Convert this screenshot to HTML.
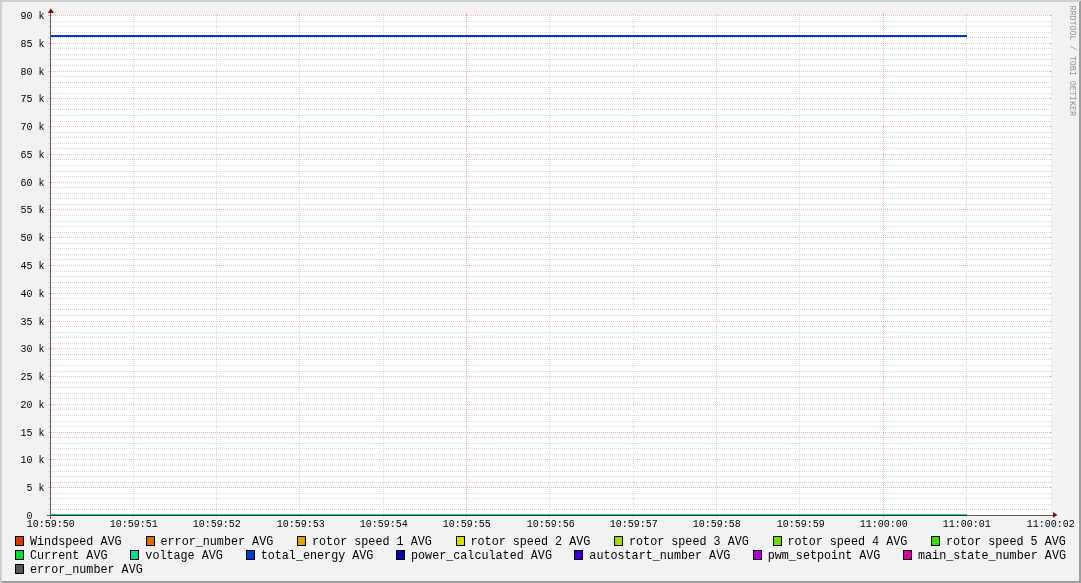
<!DOCTYPE html><html><head><meta charset="utf-8"><style>html,body{margin:0;padding:0;background:#f2f2f2;overflow:hidden;width:1081px;height:583px}svg{display:block} text{font-family:"Liberation Mono",monospace;}</style></head><body>
<svg width="1081" height="583" viewBox="0 0 1081 583" shape-rendering="crispEdges">
<defs><pattern id="hg" patternUnits="userSpaceOnUse" x="0" y="0" width="2" height="1"><rect x="0" y="0" width="1" height="1" fill="#dadada"/></pattern><pattern id="hm" patternUnits="userSpaceOnUse" x="1" y="0" width="2" height="1"><rect x="0" y="0" width="1" height="1" fill="#f3b6b6"/></pattern><pattern id="vg" patternUnits="userSpaceOnUse" x="0" y="1" width="1" height="2"><rect x="0" y="0" width="1" height="1" fill="#dadada"/></pattern><pattern id="vm" patternUnits="userSpaceOnUse" x="0" y="1" width="1" height="2"><rect x="0" y="0" width="1" height="1" fill="#f3b6b6"/></pattern><pattern id="axv" patternUnits="userSpaceOnUse" x="0" y="0" width="1" height="2"><rect x="0" y="0" width="1" height="1" fill="#626262"/><rect x="0" y="1" width="1" height="1" fill="#784444"/></pattern><pattern id="axh" patternUnits="userSpaceOnUse" x="0" y="0" width="2" height="1"><rect x="0" y="0" width="1" height="1" fill="#626262"/><rect x="1" y="0" width="1" height="1" fill="#784444"/></pattern><pattern id="axd" patternUnits="userSpaceOnUse" x="0" y="0" width="2" height="1"><rect x="0" y="0" width="1" height="1" fill="#26302c"/><rect x="1" y="0" width="1" height="1" fill="#3e2c2c"/></pattern></defs>
<rect x="0" y="0" width="1081" height="583" fill="#f2f2f2"/>
<polygon points="0,0 1081,0 1079,2 2,2 2,581 0,583" fill="#cfcfcf"/>
<polygon points="1081,0 1081,583 0,583 2,581 1079,581 1079,2" fill="#9e9e9e"/>
<rect x="50" y="15" width="1001" height="501" fill="#ffffff"/>
<rect x="48" y="509" width="2" height="1" fill="#dadada"/><rect x="51" y="509" width="999" height="1" fill="url(#hg)"/><rect x="1050" y="509" width="2" height="1" fill="#dadada"/>
<rect x="48" y="504" width="2" height="1" fill="#dadada"/><rect x="51" y="504" width="999" height="1" fill="url(#hg)"/><rect x="1050" y="504" width="2" height="1" fill="#dadada"/>
<rect x="48" y="498" width="2" height="1" fill="#dadada"/><rect x="51" y="498" width="999" height="1" fill="url(#hg)"/><rect x="1050" y="498" width="2" height="1" fill="#dadada"/>
<rect x="48" y="493" width="2" height="1" fill="#dadada"/><rect x="51" y="493" width="999" height="1" fill="url(#hg)"/><rect x="1050" y="493" width="2" height="1" fill="#dadada"/>
<rect x="48" y="482" width="2" height="1" fill="#dadada"/><rect x="51" y="482" width="999" height="1" fill="url(#hg)"/><rect x="1050" y="482" width="2" height="1" fill="#dadada"/>
<rect x="48" y="476" width="2" height="1" fill="#dadada"/><rect x="51" y="476" width="999" height="1" fill="url(#hg)"/><rect x="1050" y="476" width="2" height="1" fill="#dadada"/>
<rect x="48" y="471" width="2" height="1" fill="#dadada"/><rect x="51" y="471" width="999" height="1" fill="url(#hg)"/><rect x="1050" y="471" width="2" height="1" fill="#dadada"/>
<rect x="48" y="465" width="2" height="1" fill="#dadada"/><rect x="51" y="465" width="999" height="1" fill="url(#hg)"/><rect x="1050" y="465" width="2" height="1" fill="#dadada"/>
<rect x="48" y="454" width="2" height="1" fill="#dadada"/><rect x="51" y="454" width="999" height="1" fill="url(#hg)"/><rect x="1050" y="454" width="2" height="1" fill="#dadada"/>
<rect x="48" y="448" width="2" height="1" fill="#dadada"/><rect x="51" y="448" width="999" height="1" fill="url(#hg)"/><rect x="1050" y="448" width="2" height="1" fill="#dadada"/>
<rect x="48" y="443" width="2" height="1" fill="#dadada"/><rect x="51" y="443" width="999" height="1" fill="url(#hg)"/><rect x="1050" y="443" width="2" height="1" fill="#dadada"/>
<rect x="48" y="437" width="2" height="1" fill="#dadada"/><rect x="51" y="437" width="999" height="1" fill="url(#hg)"/><rect x="1050" y="437" width="2" height="1" fill="#dadada"/>
<rect x="48" y="426" width="2" height="1" fill="#dadada"/><rect x="51" y="426" width="999" height="1" fill="url(#hg)"/><rect x="1050" y="426" width="2" height="1" fill="#dadada"/>
<rect x="48" y="421" width="2" height="1" fill="#dadada"/><rect x="51" y="421" width="999" height="1" fill="url(#hg)"/><rect x="1050" y="421" width="2" height="1" fill="#dadada"/>
<rect x="48" y="415" width="2" height="1" fill="#dadada"/><rect x="51" y="415" width="999" height="1" fill="url(#hg)"/><rect x="1050" y="415" width="2" height="1" fill="#dadada"/>
<rect x="48" y="409" width="2" height="1" fill="#dadada"/><rect x="51" y="409" width="999" height="1" fill="url(#hg)"/><rect x="1050" y="409" width="2" height="1" fill="#dadada"/>
<rect x="48" y="398" width="2" height="1" fill="#dadada"/><rect x="51" y="398" width="999" height="1" fill="url(#hg)"/><rect x="1050" y="398" width="2" height="1" fill="#dadada"/>
<rect x="48" y="393" width="2" height="1" fill="#dadada"/><rect x="51" y="393" width="999" height="1" fill="url(#hg)"/><rect x="1050" y="393" width="2" height="1" fill="#dadada"/>
<rect x="48" y="387" width="2" height="1" fill="#dadada"/><rect x="51" y="387" width="999" height="1" fill="url(#hg)"/><rect x="1050" y="387" width="2" height="1" fill="#dadada"/>
<rect x="48" y="382" width="2" height="1" fill="#dadada"/><rect x="51" y="382" width="999" height="1" fill="url(#hg)"/><rect x="1050" y="382" width="2" height="1" fill="#dadada"/>
<rect x="48" y="371" width="2" height="1" fill="#dadada"/><rect x="51" y="371" width="999" height="1" fill="url(#hg)"/><rect x="1050" y="371" width="2" height="1" fill="#dadada"/>
<rect x="48" y="365" width="2" height="1" fill="#dadada"/><rect x="51" y="365" width="999" height="1" fill="url(#hg)"/><rect x="1050" y="365" width="2" height="1" fill="#dadada"/>
<rect x="48" y="359" width="2" height="1" fill="#dadada"/><rect x="51" y="359" width="999" height="1" fill="url(#hg)"/><rect x="1050" y="359" width="2" height="1" fill="#dadada"/>
<rect x="48" y="354" width="2" height="1" fill="#dadada"/><rect x="51" y="354" width="999" height="1" fill="url(#hg)"/><rect x="1050" y="354" width="2" height="1" fill="#dadada"/>
<rect x="48" y="343" width="2" height="1" fill="#dadada"/><rect x="51" y="343" width="999" height="1" fill="url(#hg)"/><rect x="1050" y="343" width="2" height="1" fill="#dadada"/>
<rect x="48" y="337" width="2" height="1" fill="#dadada"/><rect x="51" y="337" width="999" height="1" fill="url(#hg)"/><rect x="1050" y="337" width="2" height="1" fill="#dadada"/>
<rect x="48" y="332" width="2" height="1" fill="#dadada"/><rect x="51" y="332" width="999" height="1" fill="url(#hg)"/><rect x="1050" y="332" width="2" height="1" fill="#dadada"/>
<rect x="48" y="326" width="2" height="1" fill="#dadada"/><rect x="51" y="326" width="999" height="1" fill="url(#hg)"/><rect x="1050" y="326" width="2" height="1" fill="#dadada"/>
<rect x="48" y="315" width="2" height="1" fill="#dadada"/><rect x="51" y="315" width="999" height="1" fill="url(#hg)"/><rect x="1050" y="315" width="2" height="1" fill="#dadada"/>
<rect x="48" y="309" width="2" height="1" fill="#dadada"/><rect x="51" y="309" width="999" height="1" fill="url(#hg)"/><rect x="1050" y="309" width="2" height="1" fill="#dadada"/>
<rect x="48" y="304" width="2" height="1" fill="#dadada"/><rect x="51" y="304" width="999" height="1" fill="url(#hg)"/><rect x="1050" y="304" width="2" height="1" fill="#dadada"/>
<rect x="48" y="298" width="2" height="1" fill="#dadada"/><rect x="51" y="298" width="999" height="1" fill="url(#hg)"/><rect x="1050" y="298" width="2" height="1" fill="#dadada"/>
<rect x="48" y="287" width="2" height="1" fill="#dadada"/><rect x="51" y="287" width="999" height="1" fill="url(#hg)"/><rect x="1050" y="287" width="2" height="1" fill="#dadada"/>
<rect x="48" y="282" width="2" height="1" fill="#dadada"/><rect x="51" y="282" width="999" height="1" fill="url(#hg)"/><rect x="1050" y="282" width="2" height="1" fill="#dadada"/>
<rect x="48" y="276" width="2" height="1" fill="#dadada"/><rect x="51" y="276" width="999" height="1" fill="url(#hg)"/><rect x="1050" y="276" width="2" height="1" fill="#dadada"/>
<rect x="48" y="271" width="2" height="1" fill="#dadada"/><rect x="51" y="271" width="999" height="1" fill="url(#hg)"/><rect x="1050" y="271" width="2" height="1" fill="#dadada"/>
<rect x="48" y="259" width="2" height="1" fill="#dadada"/><rect x="51" y="259" width="999" height="1" fill="url(#hg)"/><rect x="1050" y="259" width="2" height="1" fill="#dadada"/>
<rect x="48" y="254" width="2" height="1" fill="#dadada"/><rect x="51" y="254" width="999" height="1" fill="url(#hg)"/><rect x="1050" y="254" width="2" height="1" fill="#dadada"/>
<rect x="48" y="248" width="2" height="1" fill="#dadada"/><rect x="51" y="248" width="999" height="1" fill="url(#hg)"/><rect x="1050" y="248" width="2" height="1" fill="#dadada"/>
<rect x="48" y="243" width="2" height="1" fill="#dadada"/><rect x="51" y="243" width="999" height="1" fill="url(#hg)"/><rect x="1050" y="243" width="2" height="1" fill="#dadada"/>
<rect x="48" y="232" width="2" height="1" fill="#dadada"/><rect x="51" y="232" width="999" height="1" fill="url(#hg)"/><rect x="1050" y="232" width="2" height="1" fill="#dadada"/>
<rect x="48" y="226" width="2" height="1" fill="#dadada"/><rect x="51" y="226" width="999" height="1" fill="url(#hg)"/><rect x="1050" y="226" width="2" height="1" fill="#dadada"/>
<rect x="48" y="221" width="2" height="1" fill="#dadada"/><rect x="51" y="221" width="999" height="1" fill="url(#hg)"/><rect x="1050" y="221" width="2" height="1" fill="#dadada"/>
<rect x="48" y="215" width="2" height="1" fill="#dadada"/><rect x="51" y="215" width="999" height="1" fill="url(#hg)"/><rect x="1050" y="215" width="2" height="1" fill="#dadada"/>
<rect x="48" y="204" width="2" height="1" fill="#dadada"/><rect x="51" y="204" width="999" height="1" fill="url(#hg)"/><rect x="1050" y="204" width="2" height="1" fill="#dadada"/>
<rect x="48" y="198" width="2" height="1" fill="#dadada"/><rect x="51" y="198" width="999" height="1" fill="url(#hg)"/><rect x="1050" y="198" width="2" height="1" fill="#dadada"/>
<rect x="48" y="193" width="2" height="1" fill="#dadada"/><rect x="51" y="193" width="999" height="1" fill="url(#hg)"/><rect x="1050" y="193" width="2" height="1" fill="#dadada"/>
<rect x="48" y="187" width="2" height="1" fill="#dadada"/><rect x="51" y="187" width="999" height="1" fill="url(#hg)"/><rect x="1050" y="187" width="2" height="1" fill="#dadada"/>
<rect x="48" y="176" width="2" height="1" fill="#dadada"/><rect x="51" y="176" width="999" height="1" fill="url(#hg)"/><rect x="1050" y="176" width="2" height="1" fill="#dadada"/>
<rect x="48" y="171" width="2" height="1" fill="#dadada"/><rect x="51" y="171" width="999" height="1" fill="url(#hg)"/><rect x="1050" y="171" width="2" height="1" fill="#dadada"/>
<rect x="48" y="165" width="2" height="1" fill="#dadada"/><rect x="51" y="165" width="999" height="1" fill="url(#hg)"/><rect x="1050" y="165" width="2" height="1" fill="#dadada"/>
<rect x="48" y="159" width="2" height="1" fill="#dadada"/><rect x="51" y="159" width="999" height="1" fill="url(#hg)"/><rect x="1050" y="159" width="2" height="1" fill="#dadada"/>
<rect x="48" y="148" width="2" height="1" fill="#dadada"/><rect x="51" y="148" width="999" height="1" fill="url(#hg)"/><rect x="1050" y="148" width="2" height="1" fill="#dadada"/>
<rect x="48" y="143" width="2" height="1" fill="#dadada"/><rect x="51" y="143" width="999" height="1" fill="url(#hg)"/><rect x="1050" y="143" width="2" height="1" fill="#dadada"/>
<rect x="48" y="137" width="2" height="1" fill="#dadada"/><rect x="51" y="137" width="999" height="1" fill="url(#hg)"/><rect x="1050" y="137" width="2" height="1" fill="#dadada"/>
<rect x="48" y="132" width="2" height="1" fill="#dadada"/><rect x="51" y="132" width="999" height="1" fill="url(#hg)"/><rect x="1050" y="132" width="2" height="1" fill="#dadada"/>
<rect x="48" y="121" width="2" height="1" fill="#dadada"/><rect x="51" y="121" width="999" height="1" fill="url(#hg)"/><rect x="1050" y="121" width="2" height="1" fill="#dadada"/>
<rect x="48" y="115" width="2" height="1" fill="#dadada"/><rect x="51" y="115" width="999" height="1" fill="url(#hg)"/><rect x="1050" y="115" width="2" height="1" fill="#dadada"/>
<rect x="48" y="109" width="2" height="1" fill="#dadada"/><rect x="51" y="109" width="999" height="1" fill="url(#hg)"/><rect x="1050" y="109" width="2" height="1" fill="#dadada"/>
<rect x="48" y="104" width="2" height="1" fill="#dadada"/><rect x="51" y="104" width="999" height="1" fill="url(#hg)"/><rect x="1050" y="104" width="2" height="1" fill="#dadada"/>
<rect x="48" y="93" width="2" height="1" fill="#dadada"/><rect x="51" y="93" width="999" height="1" fill="url(#hg)"/><rect x="1050" y="93" width="2" height="1" fill="#dadada"/>
<rect x="48" y="87" width="2" height="1" fill="#dadada"/><rect x="51" y="87" width="999" height="1" fill="url(#hg)"/><rect x="1050" y="87" width="2" height="1" fill="#dadada"/>
<rect x="48" y="82" width="2" height="1" fill="#dadada"/><rect x="51" y="82" width="999" height="1" fill="url(#hg)"/><rect x="1050" y="82" width="2" height="1" fill="#dadada"/>
<rect x="48" y="76" width="2" height="1" fill="#dadada"/><rect x="51" y="76" width="999" height="1" fill="url(#hg)"/><rect x="1050" y="76" width="2" height="1" fill="#dadada"/>
<rect x="48" y="65" width="2" height="1" fill="#dadada"/><rect x="51" y="65" width="999" height="1" fill="url(#hg)"/><rect x="1050" y="65" width="2" height="1" fill="#dadada"/>
<rect x="48" y="59" width="2" height="1" fill="#dadada"/><rect x="51" y="59" width="999" height="1" fill="url(#hg)"/><rect x="1050" y="59" width="2" height="1" fill="#dadada"/>
<rect x="48" y="54" width="2" height="1" fill="#dadada"/><rect x="51" y="54" width="999" height="1" fill="url(#hg)"/><rect x="1050" y="54" width="2" height="1" fill="#dadada"/>
<rect x="48" y="48" width="2" height="1" fill="#dadada"/><rect x="51" y="48" width="999" height="1" fill="url(#hg)"/><rect x="1050" y="48" width="2" height="1" fill="#dadada"/>
<rect x="48" y="37" width="2" height="1" fill="#dadada"/><rect x="51" y="37" width="999" height="1" fill="url(#hg)"/><rect x="1050" y="37" width="2" height="1" fill="#dadada"/>
<rect x="48" y="32" width="2" height="1" fill="#dadada"/><rect x="51" y="32" width="999" height="1" fill="url(#hg)"/><rect x="1050" y="32" width="2" height="1" fill="#dadada"/>
<rect x="48" y="26" width="2" height="1" fill="#dadada"/><rect x="51" y="26" width="999" height="1" fill="url(#hg)"/><rect x="1050" y="26" width="2" height="1" fill="#dadada"/>
<rect x="48" y="21" width="2" height="1" fill="#dadada"/><rect x="51" y="21" width="999" height="1" fill="url(#hg)"/><rect x="1050" y="21" width="2" height="1" fill="#dadada"/>
<rect x="133" y="13" width="1" height="2" fill="#dadada"/><rect x="133" y="15" width="1" height="500" fill="url(#vg)"/><rect x="133" y="516" width="1" height="2" fill="#dadada"/>
<rect x="216" y="13" width="1" height="2" fill="#dadada"/><rect x="216" y="15" width="1" height="500" fill="url(#vg)"/><rect x="216" y="516" width="1" height="2" fill="#dadada"/>
<rect x="299" y="13" width="1" height="2" fill="#dadada"/><rect x="299" y="15" width="1" height="500" fill="url(#vg)"/><rect x="299" y="516" width="1" height="2" fill="#dadada"/>
<rect x="383" y="13" width="1" height="2" fill="#dadada"/><rect x="383" y="15" width="1" height="500" fill="url(#vg)"/><rect x="383" y="516" width="1" height="2" fill="#dadada"/>
<rect x="549" y="13" width="1" height="2" fill="#dadada"/><rect x="549" y="15" width="1" height="500" fill="url(#vg)"/><rect x="549" y="516" width="1" height="2" fill="#dadada"/>
<rect x="633" y="13" width="1" height="2" fill="#dadada"/><rect x="633" y="15" width="1" height="500" fill="url(#vg)"/><rect x="633" y="516" width="1" height="2" fill="#dadada"/>
<rect x="716" y="13" width="1" height="2" fill="#dadada"/><rect x="716" y="15" width="1" height="500" fill="url(#vg)"/><rect x="716" y="516" width="1" height="2" fill="#dadada"/>
<rect x="799" y="13" width="1" height="2" fill="#dadada"/><rect x="799" y="15" width="1" height="500" fill="url(#vg)"/><rect x="799" y="516" width="1" height="2" fill="#dadada"/>
<rect x="966" y="13" width="1" height="2" fill="#dadada"/><rect x="966" y="15" width="1" height="500" fill="url(#vg)"/><rect x="966" y="516" width="1" height="2" fill="#dadada"/>
<rect x="48" y="487" width="2" height="1" fill="#f3b6b6"/><rect x="51" y="487" width="999" height="1" fill="url(#hm)"/><rect x="1050" y="487" width="2" height="1" fill="#f3b6b6"/>
<rect x="48" y="459" width="2" height="1" fill="#f3b6b6"/><rect x="51" y="459" width="999" height="1" fill="url(#hm)"/><rect x="1050" y="459" width="2" height="1" fill="#f3b6b6"/>
<rect x="48" y="432" width="2" height="1" fill="#f3b6b6"/><rect x="51" y="432" width="999" height="1" fill="url(#hm)"/><rect x="1050" y="432" width="2" height="1" fill="#f3b6b6"/>
<rect x="48" y="404" width="2" height="1" fill="#f3b6b6"/><rect x="51" y="404" width="999" height="1" fill="url(#hm)"/><rect x="1050" y="404" width="2" height="1" fill="#f3b6b6"/>
<rect x="48" y="376" width="2" height="1" fill="#f3b6b6"/><rect x="51" y="376" width="999" height="1" fill="url(#hm)"/><rect x="1050" y="376" width="2" height="1" fill="#f3b6b6"/>
<rect x="48" y="348" width="2" height="1" fill="#f3b6b6"/><rect x="51" y="348" width="999" height="1" fill="url(#hm)"/><rect x="1050" y="348" width="2" height="1" fill="#f3b6b6"/>
<rect x="48" y="321" width="2" height="1" fill="#f3b6b6"/><rect x="51" y="321" width="999" height="1" fill="url(#hm)"/><rect x="1050" y="321" width="2" height="1" fill="#f3b6b6"/>
<rect x="48" y="293" width="2" height="1" fill="#f3b6b6"/><rect x="51" y="293" width="999" height="1" fill="url(#hm)"/><rect x="1050" y="293" width="2" height="1" fill="#f3b6b6"/>
<rect x="48" y="265" width="2" height="1" fill="#f3b6b6"/><rect x="51" y="265" width="999" height="1" fill="url(#hm)"/><rect x="1050" y="265" width="2" height="1" fill="#f3b6b6"/>
<rect x="48" y="237" width="2" height="1" fill="#f3b6b6"/><rect x="51" y="237" width="999" height="1" fill="url(#hm)"/><rect x="1050" y="237" width="2" height="1" fill="#f3b6b6"/>
<rect x="48" y="209" width="2" height="1" fill="#f3b6b6"/><rect x="51" y="209" width="999" height="1" fill="url(#hm)"/><rect x="1050" y="209" width="2" height="1" fill="#f3b6b6"/>
<rect x="48" y="182" width="2" height="1" fill="#f3b6b6"/><rect x="51" y="182" width="999" height="1" fill="url(#hm)"/><rect x="1050" y="182" width="2" height="1" fill="#f3b6b6"/>
<rect x="48" y="154" width="2" height="1" fill="#f3b6b6"/><rect x="51" y="154" width="999" height="1" fill="url(#hm)"/><rect x="1050" y="154" width="2" height="1" fill="#f3b6b6"/>
<rect x="48" y="126" width="2" height="1" fill="#f3b6b6"/><rect x="51" y="126" width="999" height="1" fill="url(#hm)"/><rect x="1050" y="126" width="2" height="1" fill="#f3b6b6"/>
<rect x="48" y="98" width="2" height="1" fill="#f3b6b6"/><rect x="51" y="98" width="999" height="1" fill="url(#hm)"/><rect x="1050" y="98" width="2" height="1" fill="#f3b6b6"/>
<rect x="48" y="71" width="2" height="1" fill="#f3b6b6"/><rect x="51" y="71" width="999" height="1" fill="url(#hm)"/><rect x="1050" y="71" width="2" height="1" fill="#f3b6b6"/>
<rect x="48" y="43" width="2" height="1" fill="#f3b6b6"/><rect x="51" y="43" width="999" height="1" fill="url(#hm)"/><rect x="1050" y="43" width="2" height="1" fill="#f3b6b6"/>
<rect x="48" y="15" width="2" height="1" fill="#f3b6b6"/><rect x="51" y="15" width="999" height="1" fill="url(#hm)"/><rect x="1050" y="15" width="2" height="1" fill="#f3b6b6"/>
<rect x="466" y="13" width="1" height="2" fill="#f3b6b6"/><rect x="466" y="15" width="1" height="500" fill="url(#vm)"/><rect x="466" y="516" width="1" height="2" fill="#f3b6b6"/>
<rect x="883" y="13" width="1" height="2" fill="#f3b6b6"/><rect x="883" y="15" width="1" height="500" fill="url(#vm)"/><rect x="883" y="516" width="1" height="2" fill="#f3b6b6"/>
<rect x="216" y="509" width="1" height="1" fill="#cacaca"/>
<rect x="216" y="493" width="1" height="1" fill="#cacaca"/>
<rect x="216" y="471" width="1" height="1" fill="#cacaca"/>
<rect x="216" y="465" width="1" height="1" fill="#cacaca"/>
<rect x="216" y="443" width="1" height="1" fill="#cacaca"/>
<rect x="216" y="437" width="1" height="1" fill="#cacaca"/>
<rect x="216" y="421" width="1" height="1" fill="#cacaca"/>
<rect x="216" y="415" width="1" height="1" fill="#cacaca"/>
<rect x="216" y="409" width="1" height="1" fill="#cacaca"/>
<rect x="216" y="393" width="1" height="1" fill="#cacaca"/>
<rect x="216" y="387" width="1" height="1" fill="#cacaca"/>
<rect x="216" y="371" width="1" height="1" fill="#cacaca"/>
<rect x="216" y="365" width="1" height="1" fill="#cacaca"/>
<rect x="216" y="359" width="1" height="1" fill="#cacaca"/>
<rect x="216" y="343" width="1" height="1" fill="#cacaca"/>
<rect x="216" y="337" width="1" height="1" fill="#cacaca"/>
<rect x="216" y="315" width="1" height="1" fill="#cacaca"/>
<rect x="216" y="309" width="1" height="1" fill="#cacaca"/>
<rect x="216" y="287" width="1" height="1" fill="#cacaca"/>
<rect x="216" y="271" width="1" height="1" fill="#cacaca"/>
<rect x="216" y="259" width="1" height="1" fill="#cacaca"/>
<rect x="216" y="243" width="1" height="1" fill="#cacaca"/>
<rect x="216" y="221" width="1" height="1" fill="#cacaca"/>
<rect x="216" y="215" width="1" height="1" fill="#cacaca"/>
<rect x="216" y="193" width="1" height="1" fill="#cacaca"/>
<rect x="216" y="187" width="1" height="1" fill="#cacaca"/>
<rect x="216" y="171" width="1" height="1" fill="#cacaca"/>
<rect x="216" y="165" width="1" height="1" fill="#cacaca"/>
<rect x="216" y="159" width="1" height="1" fill="#cacaca"/>
<rect x="216" y="143" width="1" height="1" fill="#cacaca"/>
<rect x="216" y="137" width="1" height="1" fill="#cacaca"/>
<rect x="216" y="121" width="1" height="1" fill="#cacaca"/>
<rect x="216" y="115" width="1" height="1" fill="#cacaca"/>
<rect x="216" y="109" width="1" height="1" fill="#cacaca"/>
<rect x="216" y="93" width="1" height="1" fill="#cacaca"/>
<rect x="216" y="87" width="1" height="1" fill="#cacaca"/>
<rect x="216" y="65" width="1" height="1" fill="#cacaca"/>
<rect x="216" y="59" width="1" height="1" fill="#cacaca"/>
<rect x="216" y="37" width="1" height="1" fill="#cacaca"/>
<rect x="216" y="21" width="1" height="1" fill="#cacaca"/>
<rect x="466" y="509" width="1" height="1" fill="#d6acac"/>
<rect x="466" y="493" width="1" height="1" fill="#d6acac"/>
<rect x="466" y="471" width="1" height="1" fill="#d6acac"/>
<rect x="466" y="465" width="1" height="1" fill="#d6acac"/>
<rect x="466" y="443" width="1" height="1" fill="#d6acac"/>
<rect x="466" y="437" width="1" height="1" fill="#d6acac"/>
<rect x="466" y="421" width="1" height="1" fill="#d6acac"/>
<rect x="466" y="415" width="1" height="1" fill="#d6acac"/>
<rect x="466" y="409" width="1" height="1" fill="#d6acac"/>
<rect x="466" y="393" width="1" height="1" fill="#d6acac"/>
<rect x="466" y="387" width="1" height="1" fill="#d6acac"/>
<rect x="466" y="371" width="1" height="1" fill="#d6acac"/>
<rect x="466" y="365" width="1" height="1" fill="#d6acac"/>
<rect x="466" y="359" width="1" height="1" fill="#d6acac"/>
<rect x="466" y="343" width="1" height="1" fill="#d6acac"/>
<rect x="466" y="337" width="1" height="1" fill="#d6acac"/>
<rect x="466" y="315" width="1" height="1" fill="#d6acac"/>
<rect x="466" y="309" width="1" height="1" fill="#d6acac"/>
<rect x="466" y="287" width="1" height="1" fill="#d6acac"/>
<rect x="466" y="271" width="1" height="1" fill="#d6acac"/>
<rect x="466" y="259" width="1" height="1" fill="#d6acac"/>
<rect x="466" y="243" width="1" height="1" fill="#d6acac"/>
<rect x="466" y="221" width="1" height="1" fill="#d6acac"/>
<rect x="466" y="215" width="1" height="1" fill="#d6acac"/>
<rect x="466" y="193" width="1" height="1" fill="#d6acac"/>
<rect x="466" y="187" width="1" height="1" fill="#d6acac"/>
<rect x="466" y="171" width="1" height="1" fill="#d6acac"/>
<rect x="466" y="165" width="1" height="1" fill="#d6acac"/>
<rect x="466" y="159" width="1" height="1" fill="#d6acac"/>
<rect x="466" y="143" width="1" height="1" fill="#d6acac"/>
<rect x="466" y="137" width="1" height="1" fill="#d6acac"/>
<rect x="466" y="121" width="1" height="1" fill="#d6acac"/>
<rect x="466" y="115" width="1" height="1" fill="#d6acac"/>
<rect x="466" y="109" width="1" height="1" fill="#d6acac"/>
<rect x="466" y="93" width="1" height="1" fill="#d6acac"/>
<rect x="466" y="87" width="1" height="1" fill="#d6acac"/>
<rect x="466" y="65" width="1" height="1" fill="#d6acac"/>
<rect x="466" y="59" width="1" height="1" fill="#d6acac"/>
<rect x="466" y="37" width="1" height="1" fill="#d6acac"/>
<rect x="466" y="21" width="1" height="1" fill="#d6acac"/>
<rect x="716" y="509" width="1" height="1" fill="#cacaca"/>
<rect x="716" y="493" width="1" height="1" fill="#cacaca"/>
<rect x="716" y="471" width="1" height="1" fill="#cacaca"/>
<rect x="716" y="465" width="1" height="1" fill="#cacaca"/>
<rect x="716" y="443" width="1" height="1" fill="#cacaca"/>
<rect x="716" y="437" width="1" height="1" fill="#cacaca"/>
<rect x="716" y="421" width="1" height="1" fill="#cacaca"/>
<rect x="716" y="415" width="1" height="1" fill="#cacaca"/>
<rect x="716" y="409" width="1" height="1" fill="#cacaca"/>
<rect x="716" y="393" width="1" height="1" fill="#cacaca"/>
<rect x="716" y="387" width="1" height="1" fill="#cacaca"/>
<rect x="716" y="371" width="1" height="1" fill="#cacaca"/>
<rect x="716" y="365" width="1" height="1" fill="#cacaca"/>
<rect x="716" y="359" width="1" height="1" fill="#cacaca"/>
<rect x="716" y="343" width="1" height="1" fill="#cacaca"/>
<rect x="716" y="337" width="1" height="1" fill="#cacaca"/>
<rect x="716" y="315" width="1" height="1" fill="#cacaca"/>
<rect x="716" y="309" width="1" height="1" fill="#cacaca"/>
<rect x="716" y="287" width="1" height="1" fill="#cacaca"/>
<rect x="716" y="271" width="1" height="1" fill="#cacaca"/>
<rect x="716" y="259" width="1" height="1" fill="#cacaca"/>
<rect x="716" y="243" width="1" height="1" fill="#cacaca"/>
<rect x="716" y="221" width="1" height="1" fill="#cacaca"/>
<rect x="716" y="215" width="1" height="1" fill="#cacaca"/>
<rect x="716" y="193" width="1" height="1" fill="#cacaca"/>
<rect x="716" y="187" width="1" height="1" fill="#cacaca"/>
<rect x="716" y="171" width="1" height="1" fill="#cacaca"/>
<rect x="716" y="165" width="1" height="1" fill="#cacaca"/>
<rect x="716" y="159" width="1" height="1" fill="#cacaca"/>
<rect x="716" y="143" width="1" height="1" fill="#cacaca"/>
<rect x="716" y="137" width="1" height="1" fill="#cacaca"/>
<rect x="716" y="121" width="1" height="1" fill="#cacaca"/>
<rect x="716" y="115" width="1" height="1" fill="#cacaca"/>
<rect x="716" y="109" width="1" height="1" fill="#cacaca"/>
<rect x="716" y="93" width="1" height="1" fill="#cacaca"/>
<rect x="716" y="87" width="1" height="1" fill="#cacaca"/>
<rect x="716" y="65" width="1" height="1" fill="#cacaca"/>
<rect x="716" y="59" width="1" height="1" fill="#cacaca"/>
<rect x="716" y="37" width="1" height="1" fill="#cacaca"/>
<rect x="716" y="21" width="1" height="1" fill="#cacaca"/>
<rect x="966" y="509" width="1" height="1" fill="#cacaca"/>
<rect x="966" y="493" width="1" height="1" fill="#cacaca"/>
<rect x="966" y="471" width="1" height="1" fill="#cacaca"/>
<rect x="966" y="465" width="1" height="1" fill="#cacaca"/>
<rect x="966" y="443" width="1" height="1" fill="#cacaca"/>
<rect x="966" y="437" width="1" height="1" fill="#cacaca"/>
<rect x="966" y="421" width="1" height="1" fill="#cacaca"/>
<rect x="966" y="415" width="1" height="1" fill="#cacaca"/>
<rect x="966" y="409" width="1" height="1" fill="#cacaca"/>
<rect x="966" y="393" width="1" height="1" fill="#cacaca"/>
<rect x="966" y="387" width="1" height="1" fill="#cacaca"/>
<rect x="966" y="371" width="1" height="1" fill="#cacaca"/>
<rect x="966" y="365" width="1" height="1" fill="#cacaca"/>
<rect x="966" y="359" width="1" height="1" fill="#cacaca"/>
<rect x="966" y="343" width="1" height="1" fill="#cacaca"/>
<rect x="966" y="337" width="1" height="1" fill="#cacaca"/>
<rect x="966" y="315" width="1" height="1" fill="#cacaca"/>
<rect x="966" y="309" width="1" height="1" fill="#cacaca"/>
<rect x="966" y="287" width="1" height="1" fill="#cacaca"/>
<rect x="966" y="271" width="1" height="1" fill="#cacaca"/>
<rect x="966" y="259" width="1" height="1" fill="#cacaca"/>
<rect x="966" y="243" width="1" height="1" fill="#cacaca"/>
<rect x="966" y="221" width="1" height="1" fill="#cacaca"/>
<rect x="966" y="215" width="1" height="1" fill="#cacaca"/>
<rect x="966" y="193" width="1" height="1" fill="#cacaca"/>
<rect x="966" y="187" width="1" height="1" fill="#cacaca"/>
<rect x="966" y="171" width="1" height="1" fill="#cacaca"/>
<rect x="966" y="165" width="1" height="1" fill="#cacaca"/>
<rect x="966" y="159" width="1" height="1" fill="#cacaca"/>
<rect x="966" y="143" width="1" height="1" fill="#cacaca"/>
<rect x="966" y="137" width="1" height="1" fill="#cacaca"/>
<rect x="966" y="121" width="1" height="1" fill="#cacaca"/>
<rect x="966" y="115" width="1" height="1" fill="#cacaca"/>
<rect x="966" y="109" width="1" height="1" fill="#cacaca"/>
<rect x="966" y="93" width="1" height="1" fill="#cacaca"/>
<rect x="966" y="87" width="1" height="1" fill="#cacaca"/>
<rect x="966" y="65" width="1" height="1" fill="#cacaca"/>
<rect x="966" y="59" width="1" height="1" fill="#cacaca"/>
<rect x="966" y="37" width="1" height="1" fill="#cacaca"/>
<rect x="966" y="21" width="1" height="1" fill="#cacaca"/>
<rect x="50" y="35" width="917" height="2" fill="#0030d8"/>
<rect x="50" y="514" width="917" height="1" fill="#00dea0"/>
<rect x="50" y="13" width="1" height="506" fill="url(#axv)"/>
<rect x="47" y="515" width="1007" height="1" fill="url(#axh)"/>
<rect x="51" y="515" width="916" height="1" fill="url(#axd)"/>
<polygon points="47.8,13 50.9,8.3 54,13" fill="#801010" shape-rendering="geometricPrecision"/>
<polygon points="1053,512.1 1057.5,514.9 1053,517.8" fill="#801010" shape-rendering="geometricPrecision"/>
<g style="will-change:transform">
<text x="20.5" y="519" font-size="10px" xml:space="preserve" shape-rendering="geometricPrecision">&#160;0&#160;&#160;</text>
<text x="20.5" y="491" font-size="10px" xml:space="preserve" shape-rendering="geometricPrecision">&#160;5&#160;k</text>
<text x="20.5" y="463" font-size="10px" xml:space="preserve" shape-rendering="geometricPrecision">10&#160;k</text>
<text x="20.5" y="436" font-size="10px" xml:space="preserve" shape-rendering="geometricPrecision">15&#160;k</text>
<text x="20.5" y="408" font-size="10px" xml:space="preserve" shape-rendering="geometricPrecision">20&#160;k</text>
<text x="20.5" y="380" font-size="10px" xml:space="preserve" shape-rendering="geometricPrecision">25&#160;k</text>
<text x="20.5" y="352" font-size="10px" xml:space="preserve" shape-rendering="geometricPrecision">30&#160;k</text>
<text x="20.5" y="325" font-size="10px" xml:space="preserve" shape-rendering="geometricPrecision">35&#160;k</text>
<text x="20.5" y="297" font-size="10px" xml:space="preserve" shape-rendering="geometricPrecision">40&#160;k</text>
<text x="20.5" y="269" font-size="10px" xml:space="preserve" shape-rendering="geometricPrecision">45&#160;k</text>
<text x="20.5" y="241" font-size="10px" xml:space="preserve" shape-rendering="geometricPrecision">50&#160;k</text>
<text x="20.5" y="213" font-size="10px" xml:space="preserve" shape-rendering="geometricPrecision">55&#160;k</text>
<text x="20.5" y="186" font-size="10px" xml:space="preserve" shape-rendering="geometricPrecision">60&#160;k</text>
<text x="20.5" y="158" font-size="10px" xml:space="preserve" shape-rendering="geometricPrecision">65&#160;k</text>
<text x="20.5" y="130" font-size="10px" xml:space="preserve" shape-rendering="geometricPrecision">70&#160;k</text>
<text x="20.5" y="102" font-size="10px" xml:space="preserve" shape-rendering="geometricPrecision">75&#160;k</text>
<text x="20.5" y="75" font-size="10px" xml:space="preserve" shape-rendering="geometricPrecision">80&#160;k</text>
<text x="20.5" y="47" font-size="10px" xml:space="preserve" shape-rendering="geometricPrecision">85&#160;k</text>
<text x="20.5" y="19" font-size="10px" xml:space="preserve" shape-rendering="geometricPrecision">90&#160;k</text>
<text x="50.75" y="527" font-size="10px" text-anchor="middle">10:59:50</text>
<text x="133.75" y="527" font-size="10px" text-anchor="middle">10:59:51</text>
<text x="216.75" y="527" font-size="10px" text-anchor="middle">10:59:52</text>
<text x="300.75" y="527" font-size="10px" text-anchor="middle">10:59:53</text>
<text x="383.75" y="527" font-size="10px" text-anchor="middle">10:59:54</text>
<text x="466.75" y="527" font-size="10px" text-anchor="middle">10:59:55</text>
<text x="550.75" y="527" font-size="10px" text-anchor="middle">10:59:56</text>
<text x="633.75" y="527" font-size="10px" text-anchor="middle">10:59:57</text>
<text x="716.75" y="527" font-size="10px" text-anchor="middle">10:59:58</text>
<text x="800.75" y="527" font-size="10px" text-anchor="middle">10:59:59</text>
<text x="883.75" y="527" font-size="10px" text-anchor="middle">11:00:00</text>
<text x="966.75" y="527" font-size="10px" text-anchor="middle">11:00:01</text>
<text x="1050.75" y="527" font-size="10px" text-anchor="middle">11:00:02</text>
<rect x="15" y="536" width="9" height="10" fill="#000"/><rect x="16" y="537" width="7" height="8" fill="#dd3800"/>
<text transform="translate(30.00,545) scale(1,1.1)" font-size="11.75px" xml:space="preserve">Windspeed AVG</text>
<rect x="146" y="536" width="9" height="10" fill="#000"/><rect x="147" y="537" width="7" height="8" fill="#dd6e00"/>
<text transform="translate(160.50,545) scale(1,1.1)" font-size="11.75px" xml:space="preserve">error_number AVG</text>
<rect x="297" y="536" width="9" height="10" fill="#000"/><rect x="298" y="537" width="7" height="8" fill="#dda600"/>
<text transform="translate(312.00,545) scale(1,1.1)" font-size="11.75px" xml:space="preserve">rotor speed 1 AVG</text>
<rect x="456" y="536" width="9" height="10" fill="#000"/><rect x="457" y="537" width="7" height="8" fill="#d8dd00"/>
<text transform="translate(470.50,545) scale(1,1.1)" font-size="11.75px" xml:space="preserve">rotor speed 2 AVG</text>
<rect x="614" y="536" width="9" height="10" fill="#000"/><rect x="615" y="537" width="7" height="8" fill="#a6dd00"/>
<text transform="translate(629.00,545) scale(1,1.1)" font-size="11.75px" xml:space="preserve">rotor speed 3 AVG</text>
<rect x="773" y="536" width="9" height="10" fill="#000"/><rect x="774" y="537" width="7" height="8" fill="#6edd00"/>
<text transform="translate(787.50,545) scale(1,1.1)" font-size="11.75px" xml:space="preserve">rotor speed 4 AVG</text>
<rect x="931" y="536" width="9" height="10" fill="#000"/><rect x="932" y="537" width="7" height="8" fill="#38dd00"/>
<text transform="translate(946.00,545) scale(1,1.1)" font-size="11.75px" xml:space="preserve">rotor speed 5 AVG</text>
<rect x="15" y="550" width="9" height="10" fill="#000"/><rect x="16" y="551" width="7" height="8" fill="#00dd38"/>
<text transform="translate(30.00,559) scale(1,1.1)" font-size="11.75px" xml:space="preserve">Current AVG</text>
<rect x="130" y="550" width="9" height="10" fill="#000"/><rect x="131" y="551" width="7" height="8" fill="#00dda0"/>
<text transform="translate(145.33,559) scale(1,1.1)" font-size="11.75px" xml:space="preserve">voltage AVG</text>
<rect x="246" y="550" width="9" height="10" fill="#000"/><rect x="247" y="551" width="7" height="8" fill="#0038d8"/>
<text transform="translate(260.67,559) scale(1,1.1)" font-size="11.75px" xml:space="preserve">total_energy AVG</text>
<rect x="396" y="550" width="9" height="10" fill="#000"/><rect x="397" y="551" width="7" height="8" fill="#0000b0"/>
<text transform="translate(411.00,559) scale(1,1.1)" font-size="11.75px" xml:space="preserve">power_calculated AVG</text>
<rect x="574" y="550" width="9" height="10" fill="#000"/><rect x="575" y="551" width="7" height="8" fill="#3800d8"/>
<text transform="translate(589.33,559) scale(1,1.1)" font-size="11.75px" xml:space="preserve">autostart_number AVG</text>
<rect x="753" y="550" width="9" height="10" fill="#000"/><rect x="754" y="551" width="7" height="8" fill="#b000d8"/>
<text transform="translate(767.67,559) scale(1,1.1)" font-size="11.75px" xml:space="preserve">pwm_setpoint AVG</text>
<rect x="903" y="550" width="9" height="10" fill="#000"/><rect x="904" y="551" width="7" height="8" fill="#dd00a0"/>
<text transform="translate(918.00,559) scale(1,1.1)" font-size="11.75px" xml:space="preserve">main_state_number AVG</text>
<rect x="15" y="564" width="9" height="10" fill="#000"/><rect x="16" y="565" width="7" height="8" fill="#585858"/>
<text transform="translate(30.00,573) scale(1,1.1)" font-size="11.75px" xml:space="preserve">error_number AVG</text>
<text transform="translate(1070,5.4) rotate(90)" font-size="8.4px" fill="#959595">RRDTOOL / TOBI OETIKER</text>
</g></svg></body></html>
